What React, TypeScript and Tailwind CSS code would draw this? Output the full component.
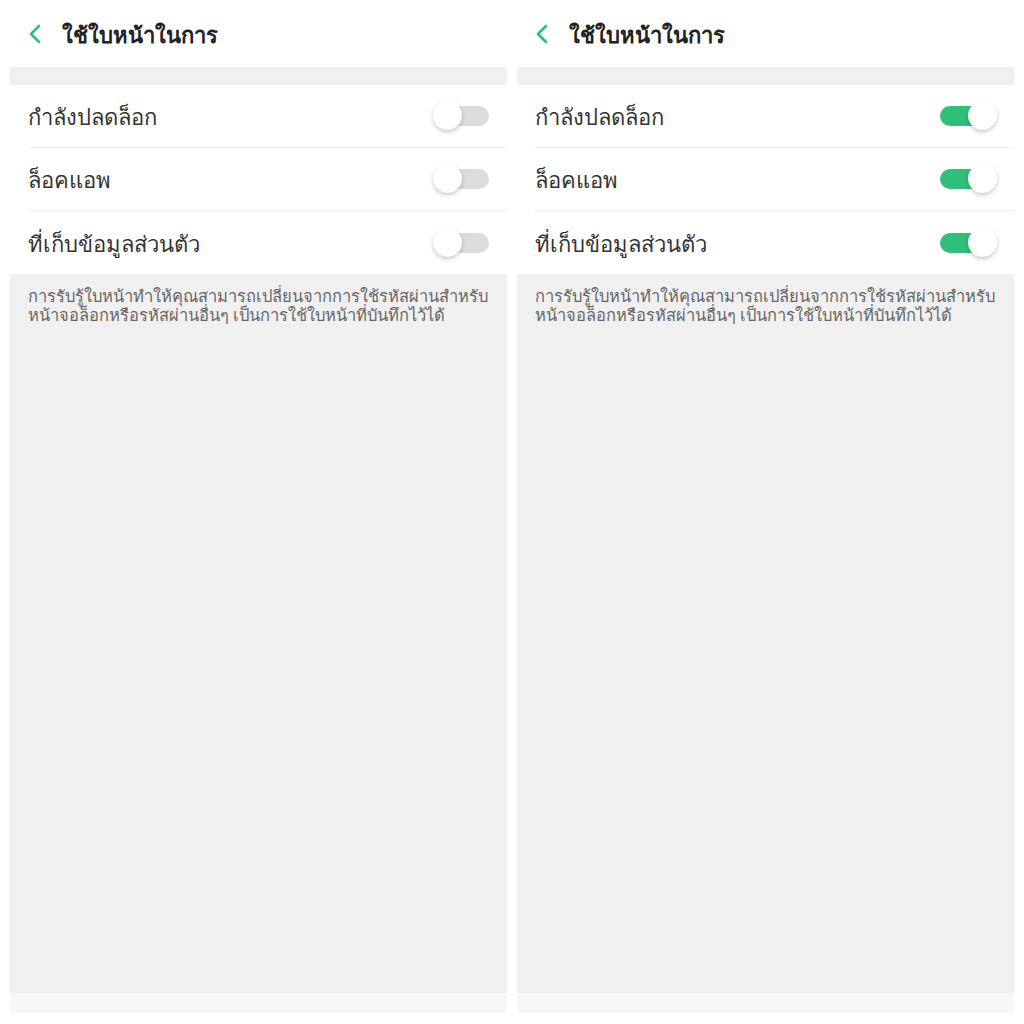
import React from 'react';

const rows = ['กำลังปลดล็อก', 'ล็อคแอพ', 'ที่เก็บข้อมูลส่วนตัว'];

function Toggle({ on }: { on: boolean }) {
  return (
    <div className="relative w-[62px] h-[30px] flex items-center">
      <div
        className={
          'absolute top-[5px] h-[20px] rounded-full ' +
          (on ? 'left-[4px] w-[52px] bg-[#2fbf78]' : 'left-[10px] w-[50px] bg-[#dcdcdc]')
        }
      />
      <div
        className={
          'absolute top-0 w-[29px] h-[29px] rounded-full bg-white shadow-[0_2px_4px_rgba(0,0,0,0.22)] ' +
          (on ? 'left-[32px]' : 'left-[4px]')
        }
      />
    </div>
  );
}

function Screen({ on }: { on: boolean }) {
  return (
    <div className="w-[497px] h-[1013px] flex flex-col bg-[#f0f0f0]">
      {/* header */}
      <div className="h-[67px] bg-white flex items-center pl-[18px]">
        <svg width="14" height="22" viewBox="0 0 14 22" className="mr-[20px]">
          <path d="M11 3 L3 11 L11 19" fill="none" stroke="#2fbf78" strokeWidth="2.6" strokeLinecap="round" strokeLinejoin="round" />
        </svg>
        <span className="text-[22px] font-bold text-[#222] leading-none">ใช้ใบหน้าในการ</span>
      </div>
      <div className="h-[18px]" />
      {/* toggles */}
      <div className="bg-white">
        {rows.map((label, i) => (
          <div key={label} className="h-[63px] pl-[18px] flex">
            <div className={'flex-1 flex items-center justify-between pr-[16px] ' + (i < rows.length - 1 ? 'border-b border-[#f0f0f0]' : '')}>
              <span className="text-[22px] text-[#333] leading-none">{label}</span>
              <Toggle on={on} />
            </div>
          </div>
        ))}
      </div>
      <p className="px-[18px] pt-[12px] text-[16.5px] leading-[19px] text-[#666] whitespace-nowrap">
        การรับรู้ใบหน้าทำให้คุณสามารถเปลี่ยนจากการใช้รหัสผ่านสำหรับ
        <br />
        หน้าจอล็อกหรือรหัสผ่านอื่นๆ เป็นการใช้ใบหน้าที่บันทึกไว้ได้
      </p>
      <div className="flex-1" />
      <div className="h-[20px] bg-[#f7f7f7]" />
    </div>
  );
}

export default function App() {
  return (
    <div className="w-[1024px] h-[1024px] bg-white flex gap-[10px] pl-[10px] font-['Noto_Sans',sans-serif]">
      <Screen on={false} />
      <Screen on={true} />
    </div>
  );
}
